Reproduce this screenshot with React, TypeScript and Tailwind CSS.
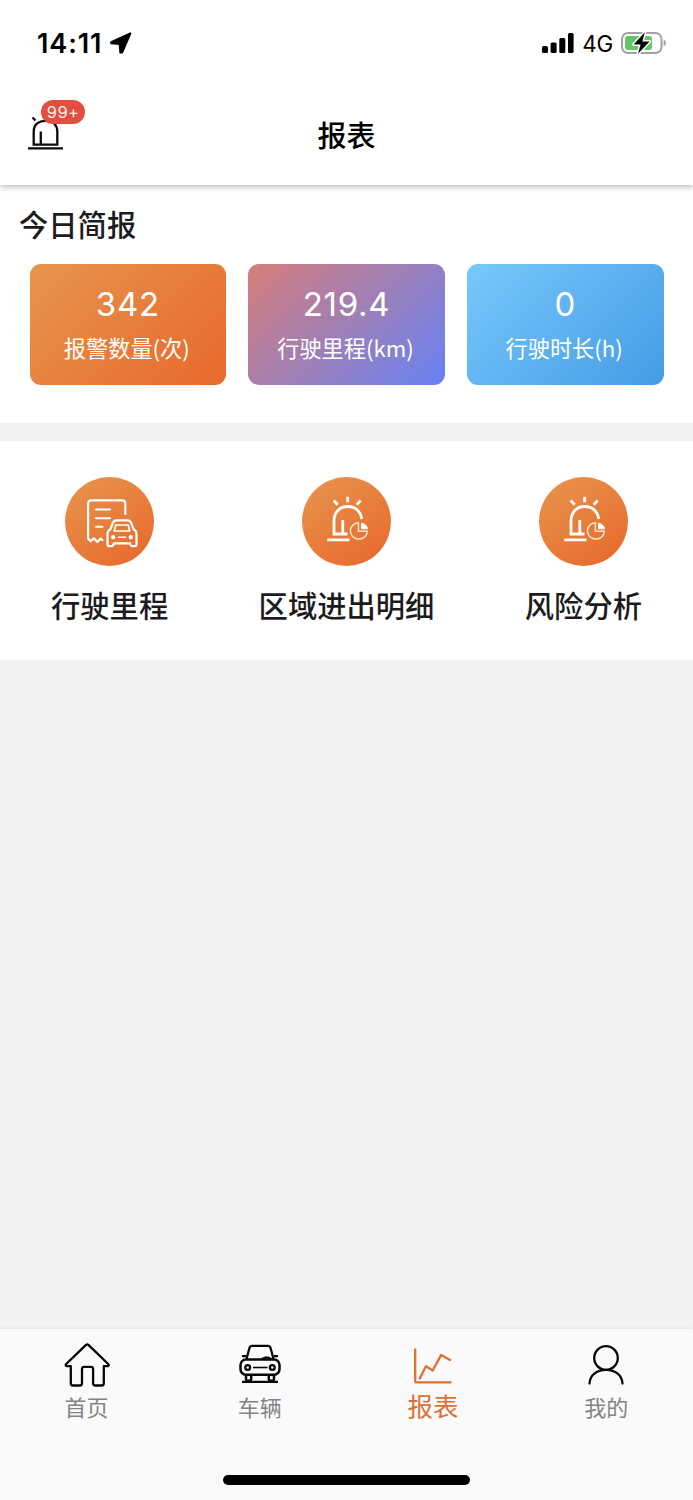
import React, { ReactNode } from 'react';

interface Stat {
  value: string;
  label: string;
  gradient: string;
}

interface Entry {
  label: string;
  icon: ReactNode;
}

interface Tab {
  label: string;
  icon: ReactNode;
  active?: boolean;
}

const LocationIcon = () => (
  <svg className="w-[24px] h-[24px]" viewBox="0 0 24 24" fill="currentColor" stroke="currentColor" strokeWidth={2} strokeLinejoin="round">
    <path d="M21.400 2.300 13.200 21.400h-1.900L10.600 13 2.200 12.300l-.1-1.200z" />
  </svg>
);

const SignalIcon = () => (
  <svg className="w-[32px] h-[20px]" viewBox="0 0 32 20" fill="currentColor">
    <rect x="0" y="13" width="6" height="7" rx="1.500" />
    <rect x="8.600" y="9.500" width="6" height="10.500" rx="1.500" />
    <rect x="17.300" y="5" width="6" height="15" rx="1.500" />
    <rect x="26" y="0" width="5.600" height="20" rx="1.500" />
  </svg>
);

const BatteryIcon = () => (
  <svg className="w-[46px] h-[24px]" viewBox="0 0 46 24" fill="none">
    <rect x="1" y="2" width="39.500" height="20" rx="6" stroke="#a3a3a5" strokeWidth={2} />
    <path d="M42.600 8.600c3 1.200 3 5.600 0 6.800z" fill="#a3a3a5" />
    <rect x="4" y="5" width="27" height="14" rx="3" fill="#65c466" />
    <path d="M23.800 1.200 12.600 13.400h7L17 22.800l11.600-12.400h-7.200z" fill="#000" stroke="#fff" strokeWidth={3} strokeLinejoin="round" paintOrder="stroke" />
  </svg>
);

const AlarmIcon = () => (
  <svg className="w-[36px] h-[36px]" viewBox="0 0 36 36" fill="none" stroke="#0b0b0b" strokeWidth={2.300}>
    <path d="M5.700 28.700V15.800C5.700 8.200 11 4.800 17.600 4.800s11.700 3.400 11.700 11v12.900z" />
    <path d="M12.800 15.500v13M0 32.400h35M4.500 1.500l3 3" />
  </svg>
);

const MileageIcon = () => (
  <svg className="w-[89px] h-[89px]" viewBox="0 0 89 89" fill="none" stroke="#fff" strokeWidth={2.200} strokeLinecap="round" strokeLinejoin="round">
    <path d="M60.300 37V26.500c0-2-1.200-3.200-3.200-3.200H26.800c-2.300 0-3.700 1.300-3.700 3.500V61.500l2.500 2.800 3.300-3 3.400 3.600 3.400-3.300 1.800 1.600" />
    <path d="M31 32.600h14M31 41.200h14M31 49.800h6.500" strokeWidth={2} />
    <path d="M45.500 52.200 47.800 46c.7-1.900 1.700-2.700 3.700-2.700h11c2 0 3 .8 3.700 2.700l2.300 6.200c2 1 3 2.800 3 5v10c0 1.300-.7 2-2 2h-2.200c-1.200 0-1.800-.7-2.200-2.800H48.900c-.4 2.100-1 2.800-2.200 2.800h-2.200c-1.300 0-2-.7-2-2v-10c0-2.200 1-4 3-5z" />
    <path d="m49.200 54 1.600-6h12.400l1.600 6z" strokeWidth={1.700} />
    <circle cx="48.200" cy="60.300" r="1.100" />
    <circle cx="65.800" cy="60.300" r="1.100" />
    <path d="M53.500 60.300h7" strokeWidth={1.400} />
  </svg>
);

const AlarmReportIcon = () => (
  <svg className="w-[89px] h-[89px]" viewBox="0 0 89 89" fill="none" stroke="#fff" strokeWidth={2.800}>
    <path d="M45.500 57H32V44.500c0-9.300 5.600-15 13.800-15 7.400 0 12.600 4.600 14 12.400" />
    <path d="M40.800 43v13.500M25.300 62.800h22.200" />
    <path d="M45.700 19.800v5.400M31.700 23.500l4 4.200M58.700 23.500l-4 4.200" />
    <path d="M56.400 45.800c-4.500.3-8 3.600-8 8.100 0 4.600 3.800 8.200 8.500 8.200 4.600 0 8.200-3.200 8.400-7.800h-8.900z" stroke="#fde3c8" strokeWidth={1.500} />
    <path d="M59.600 46.200c3.200.4 5.500 2.700 5.900 5.600h-5.900z" fill="#fff" strokeWidth={1} />
  </svg>
);

const HomeIcon = () => (
  <svg className="w-[46px] h-[46px]" viewBox="0 0 46 46" fill="none" stroke="#080808" strokeWidth={2.300} strokeLinejoin="round">
    <path d="M22 1.900c.8-.7 1.600-.7 2.400 0L44.200 21c.9.900.6 2.200-.7 2.200h-3.700v17c0 1.600-.7 2.300-2.200 2.300h-6.300c-1.500 0-2.200-.7-2.200-2.200V26c0-1.500-.7-2.200-2.200-2.200h-6.700c-1.500 0-2.200.7-2.200 2.200v14.300c0 1.500-.7 2.200-2.200 2.200H9c-1.500 0-2.200-.7-2.200-2.300v-17H3c-1.300 0-1.700-1.300-.8-2.200z" />
  </svg>
);

const CarIcon = () => (
  <svg className="w-[46px] h-[46px]" viewBox="0 0 46 46" fill="none" stroke="#080808" strokeWidth={2.300} strokeLinejoin="round">
    <path d="M9.500 16.200 12.400 5c.4-1.500 1.200-2.200 2.800-2.200h15.600c1.600 0 2.400.7 2.800 2.200l2.900 11.200" />
    <rect x="3.500" y="16.600" width="39" height="15.200" rx="5.500" strokeWidth={2.500} />
    <circle cx="10.700" cy="24.500" r="2.400" />
    <circle cx="35.300" cy="24.500" r="2.400" />
    <path d="M16 24.500h14.500" strokeWidth={1.600} />
    <path d="M5 13.200h4.500M36.500 13.200H41" />
    <path d="M24.500 15.800c2.200-2.500 8-2.500 10.200 0z" fill="#080808" strokeWidth={1} />
    <path d="M9 32v3.800c0 1.300.6 2 1.800 2h1.600c1.200 0 1.800-.7 1.800-2V32M31.800 32v3.800c0 1.300.6 2 1.800 2h1.600c1.200 0 1.800-.7 1.800-2V32" strokeWidth={2.500} />
    <path d="M5 38.900h36" />
  </svg>
);

const ChartIcon = () => (
  <svg className="w-[46px] h-[46px]" viewBox="0 0 46 46" fill="none" stroke="#dd7035" strokeWidth={2.300} strokeLinecap="round" strokeLinejoin="round">
    <path d="M5.200 6.500V37.900c0 1 .5 1.400 1.400 1.400h34" />
    <path d="m9.600 35.600 6.400-12.300 6.700 4.200 8.500-15.600 8.900 5" />
  </svg>
);

const UserIcon = () => (
  <svg className="w-[46px] h-[46px]" viewBox="0 0 46 46" fill="none" stroke="#080808" strokeWidth={2.300} strokeLinecap="round">
    <circle cx="23" cy="15" r="11.800" />
    <path d="M6.500 40.500c.3-8.200 7-13.700 16.500-13.700s16.200 5.500 16.500 13.700" />
  </svg>
);

const stats: Stat[] = [
  { value: '342', label: '报警数量(次)', gradient: 'bg-linear-[135deg,#e7944f,#e7692a]' },
  { value: '219.4', label: '行驶里程(km)', gradient: 'bg-linear-[135deg,#d77d79,#6682f5]' },
  { value: '0', label: '行驶时长(h)', gradient: 'bg-linear-[135deg,#78c8fa,#459ce6]' },
];

const entries: Entry[] = [
  { label: '行驶里程', icon: <MileageIcon /> },
  { label: '区域进出明细', icon: <AlarmReportIcon /> },
  { label: '风险分析', icon: <AlarmReportIcon /> },
];

const tabs: Tab[] = [
  { label: '首页', icon: <HomeIcon /> },
  { label: '车辆', icon: <CarIcon /> },
  { label: '报表', icon: <ChartIcon />, active: true },
  { label: '我的', icon: <UserIcon /> },
];

function StatusBar() {
  return (
    <div className="h-[86px] pl-[37px] pr-[26px] flex items-center justify-between font-['Inter',sans-serif] text-black">
      <div className="flex items-center gap-[7px]">
        <span className="text-[27px] font-semibold leading-none tracking-[0.900px]">14:11</span>
        <LocationIcon />
      </div>
      <div className="flex items-center">
        <SignalIcon />
        <span className="ml-[8px] mr-[8px] pt-[2px] text-[22.500px] leading-none tracking-[-0.300px]">4G</span>
        <BatteryIcon />
      </div>
    </div>
  );
}

function Header() {
  return (
    <header className="relative z-10 h-[185px] shrink-0 bg-white shadow-[0_1px_7px_rgba(0,0,0,0.35)]">
      <StatusBar />
      <div className="h-[96px] px-[28px] grid grid-cols-3 items-center">
        <div className="relative w-[36px] h-[36px]">
          <AlarmIcon />
          <span className="absolute left-[13px] -top-[16px] w-[44px] h-[24px] rounded-full bg-[#e14f40] text-[#fdeeea] text-[16.500px] tracking-[0.300px] leading-[25px] text-center font-['Inter',sans-serif]">99+</span>
        </div>
        <h1 className="text-center text-[29px] font-medium leading-none text-black">报表</h1>
      </div>
    </header>
  );
}

export default function App() {
  return (
    <div className="h-[1500px] flex flex-col overflow-hidden bg-[#f2f2f2] text-[#1c1c1e] font-['Noto_Sans_CJK_SC',sans-serif]">
      <Header />

      <section className="h-[238px] shrink-0 bg-white pt-[18px]">
        <h2 className="pl-[19px] text-[29.300px] font-medium leading-[40px]">今日简报</h2>
        <div className="mt-[21px] px-[29.500px] grid grid-cols-3 gap-[22px]">
          {stats.map((s) => (
            <div key={s.label} className={`h-[120.500px] rounded-[11px] flex flex-col items-center text-white ${s.gradient}`}>
              <span className="mt-[20px] text-[33px] leading-[40px] tracking-[0.700px]  font-['Inter',sans-serif]">{s.value}</span>
              <span className="mt-[7px] pr-[2px] text-[22.200px] leading-[32px]">{s.label}</span>
            </div>
          ))}
        </div>
      </section>

      <section className="mt-[18px] h-[219px] shrink-0 bg-white px-[51px] pt-[35.500px] flex justify-between">
        {entries.map((e) => (
          <div key={e.label} className="flex flex-col items-center">
            <div className="w-[89px] h-[89px] rounded-full bg-linear-[145deg,#e7954e,#e8672a]">{e.icon}</div>
            <span className="mt-[18.500px] text-[29.300px] font-medium leading-[40px]">{e.label}</span>
          </div>
        ))}
      </section>

      <nav className="mt-auto h-[171px] shrink-0 bg-[#fafafa] shadow-[0_-1px_3px_rgba(0,0,0,0.06)] flex flex-col">
        <div className="grid grid-cols-4 pt-[14px]">
          {tabs.map((t) => (
            <div key={t.label} className="flex flex-col items-center">
              {t.icon}
              {t.active ? (
                <span className="-mt-[2px] text-[25.500px] leading-[36px] text-[#dd7035]">{t.label}</span>
              ) : (
                <span className="mt-[1px] text-[22px] leading-[32px] text-[#848484]">{t.label}</span>
              )}
            </div>
          ))}
        </div>
        <div className="mt-auto mb-[15px] mx-auto w-[247px] h-[10px] rounded-full bg-black" />
      </nav>
    </div>
  );
}
